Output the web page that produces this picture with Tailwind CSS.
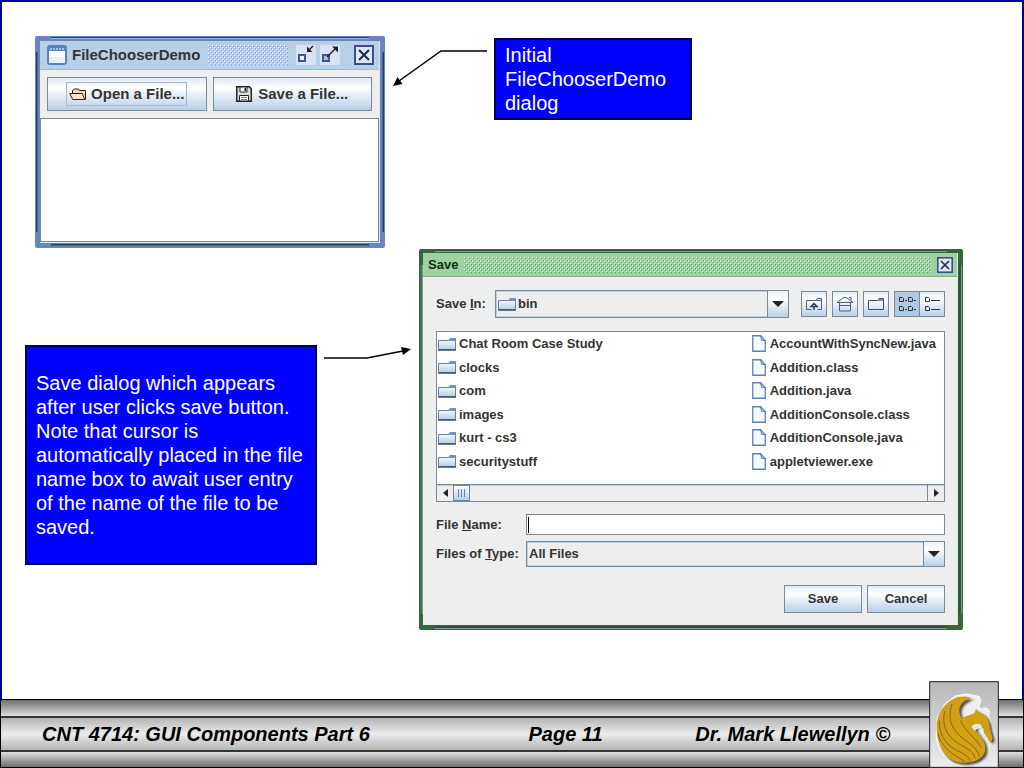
<!DOCTYPE html>
<html lang="en">
  <head>
    <meta charset="UTF-8" />
    <meta name="viewport" content="width=device-width, initial-scale=1.0" />
    <title>CNT 4714: GUI Components Part 6</title>
    <script src="https://cdn.jsdelivr.net/npm/@tailwindcss/browser@4"></script>
  </head>
  <body class="min-h-screen flex flex-col bg-white font-['Liberation_Sans',Arial,sans-serif] text-black">
    <!-- shared icons -->
    <svg class="absolute size-0" aria-hidden="true">
      <defs>
        <linearGradient id="folder-fill" x1="0" y1="0" x2="0" y2="1">
          <stop offset="0" stop-color="#ffffff" />
          <stop offset="1" stop-color="#b8cfe5" />
        </linearGradient>
        <pattern id="bumps-blue" width="4" height="4" patternUnits="userSpaceOnUse">
          <path d="M0 0h1v1h-1zM2 2h1v1h-1z" fill="#f4f8fd" />
          <path d="M1 1h1v1h-1zM3 3h1v1h-1z" fill="#7f9cc8" />
        </pattern>
        <pattern id="bumps-green" width="4" height="4" patternUnits="userSpaceOnUse">
          <path d="M0 0h1v1h-1zM2 2h1v1h-1z" fill="#e6f5e6" />
          <path d="M1 1h1v1h-1zM3 3h1v1h-1z" fill="#5f9a66" />
        </pattern>
        <symbol id="folder" viewBox="0 0 18 14">
          <path d="M.5 3.500h10l1.500-2h5.500v11h-17z" fill="url(#folder-fill)" stroke="#6b7f9e" />
          <path d="M10.500 4l2-3h5v3z" fill="#7590c4" />
          <path d="M0 13h18" stroke="#3d4d6b" stroke-width="1.500" />
        </symbol>
        <symbol id="file" viewBox="0 0 14 17">
          <path d="M.75.75h8l4.500 5v10.500h-12.500z" fill="#f5faff" stroke="#5b80b8" stroke-width="1.300" />
          <path d="M8.500.75l1 4.500 3.750.5z" fill="#b8cfe5" stroke="#5b80b8" />
        </symbol>
        <symbol id="close" viewBox="0 0 20 20">
          <rect x="1" y="1" width="18" height="18" fill="#dce8f6" stroke="#3d4f85" stroke-width="2" />
          <path d="M5 5l10 10M15 5l-10 10" stroke="#1f2a50" stroke-width="2" />
        </symbol>
      </defs>
    </svg>

    <main class="relative flex-1 min-h-[699px] border-2 border-b-0 border-[#000099]">
      <!-- FileChooserDemo window -->
      <section class="absolute left-[33px] top-[34px] w-[350px] rounded-xs bg-[#6885c0] p-[5px] text-[#333333]">
        <span class="absolute inset-x-4 top-px h-[2px] border-b border-[#a3b8dc] bg-[#2b3c60]"></span>
        <span class="absolute inset-x-4 bottom-[2px] h-[2px] border-b border-[#4c6191] bg-[#2b3c60]"></span>
        <span class="absolute inset-y-4 left-px w-[2px] border-r border-[#4c6191] bg-[#2b3c60]"></span>
        <span class="absolute inset-y-4 right-px w-[2px] border-l border-[#4c6191] bg-[#2b3c60]"></span>
        <div class="border-r border-b border-[#dce6f2] bg-[#eeeeee]">
          <header class="flex items-center h-[29px] border-b border-[#a3b8cc] bg-[#b8cfe8] pl-[7px] pr-[5px]">
            <svg class="size-5 shrink-0" viewBox="0 0 20 20">
              <rect x="1" y="1" width="18" height="18" rx="2" fill="#ffffff" stroke="#5a7fc0" stroke-width="2" />
              <path d="M1 2h18v4h-18z" fill="#5a7fc0" />
              <path d="M3 4h14" stroke="#ffffff" stroke-dasharray="2 1" />
              <path d="M2 12h16v6h-16z" fill="#e6effa" />
            </svg>
            <h1 class="ml-[5px] text-[15px] font-bold">FileChooserDemo</h1>
            <svg class="mx-2 h-5 w-20"><rect width="100%" height="100%" fill="url(#bumps-blue)" /></svg>
            <button type="button" aria-label="Minimize" class="size-5">
              <svg class="size-5" viewBox="0 0 20 20" fill="none">
                <path d="M0 0h20v20h-20z" fill="#d6e4f4" />
                <path d="M3 10h6v6h-6z" fill="#e8f0fa" stroke="#40558f" stroke-width="2" />
                <path d="M17 1l-5 5" stroke="#222222" stroke-width="1.500" />
                <path d="M11 1.500v5.500h5.500z" fill="#222222" />
              </svg>
            </button>
            <button type="button" aria-label="Maximize" class="ml-1 size-5">
              <svg class="size-5" viewBox="0 0 20 20" fill="none">
                <path d="M0 0h20v20h-20z" fill="#d6e4f4" />
                <path d="M3 10h6v6h-6z" fill="#a9bfdc" stroke="#40558f" stroke-width="2" />
                <path d="M7 12l9-9" stroke="#222222" stroke-width="1.500" />
                <path d="M12 1.500h6v6z" fill="#222222" />
              </svg>
            </button>
            <button type="button" aria-label="Close" class="ml-auto size-5">
              <svg class="size-5"><use href="#close" /></svg>
            </button>
          </header>
          <div class="grid grid-cols-2 gap-1.5 p-[7px] text-[15px] font-bold">
            <button type="button" class="flex h-[34px] items-center justify-center border border-[#7a8a99] bg-linear-to-b from-[#dfeaf6] via-white via-30% to-[#b8cfe5]">
              <span class="flex items-center gap-1 border border-[#a3b8cc] px-0.5">
                <svg class="h-4 w-[18px]" viewBox="0 0 18 16">
                  <path d="M3.500 12v-7.500l2-1.500h4l1 1.500h6v9z" fill="#f3d9b0" stroke="#222222" />
                  <path d="M.75 7.500h12.500l2.500 6h-12z" fill="#f8e4c4" stroke="#222222" />
                </svg>
                Open a File...
              </span>
            </button>
            <button type="button" class="flex h-[34px] items-center justify-center gap-1.5 border border-[#7a8a99] bg-linear-to-b from-[#dfeaf6] via-white via-30% to-[#b8cfe5]">
              <svg class="size-4" viewBox="0 0 16 16">
                <path d="M.75.75h12.500l2 2v12.500h-14.500z" fill="#d9d9d9" stroke="#222222" stroke-width="1.500" />
                <path d="M4 1h7v5h-7z" fill="#ffffff" stroke="#222222" />
                <path d="M8.500 2h1.500v3h-1.500z" fill="#222222" />
                <path d="M3.500 9.500h9v5.500h-9z" fill="#ffffff" stroke="#222222" />
                <path d="M5 11.500h6M5 13.500h6" stroke="#888888" />
              </svg>
              Save a File...
            </button>
          </div>
          <textarea aria-label="Log" class="block h-[124px] w-full resize-none border border-[#7a8a99] bg-white outline-none"></textarea>
        </div>
      </section>

      <p class="absolute left-[492px] top-9 w-[198px] border-2 border-[#000050] bg-[#0000ff] px-[9px] py-[3px] text-xl/6 text-white">
        Initial FileChooserDemo dialog
      </p>
      <svg class="absolute left-[388px] top-[44px] h-11 w-[100px]" viewBox="390 46 100 44">
        <path d="M487 51h-46l-42 30" fill="none" stroke="#000000" stroke-width="1.500" />
        <path d="M393 86l4.500-9 5 7z" />
      </svg>

      <p class="absolute left-[23px] top-[343px] w-[292px] border-2 border-[#000050] bg-[#0000ff] py-6 pl-[9px] pr-2 text-xl/6 text-white">
        Save dialog which appears after user clicks save button. Note that cursor is automatically placed in the file name box to await user entry of the name of the file to be saved.
      </p>
      <svg class="absolute left-[320px] top-[338px] h-7 w-[92px]" viewBox="322 340 92 28">
        <path d="M324 358h43l36-7" fill="none" stroke="#000000" stroke-width="1.500" />
        <path d="M411 349l-10-2 2 8z" />
      </svg>

      <!-- Save dialog -->
      <section class="absolute left-[417px] top-[247px] w-[544px] rounded-xs bg-[#33693a] p-1 pr-[5px] pb-[5px] text-[13px] font-bold text-[#333333]">
        <span class="absolute inset-x-4 top-px h-[2px] border-b border-[#7f9f8b] bg-[#2f4f3c]"></span>
        <span class="absolute inset-x-4 bottom-px h-[3px] border-b border-[#7f9f8b] bg-[#2f4f3c]"></span>
        <span class="absolute inset-y-4 left-px w-[3px] border-r border-[#7f9f8b] bg-[#4a6b57]"></span>
        <span class="absolute inset-y-4 right-px w-[3px] border-r border-[#7f9f8b] bg-[#2f4f3c]"></span>
        <div class="border-r border-[#d5ecd2] bg-[#eeeeee]">
          <header class="flex h-6 items-center gap-1.5 border-b border-[#7fb083] bg-[#9fd0a0] pl-[5px] pr-1">
            <h2 class="text-[#0c330f]">Save</h2>
            <svg class="h-4 flex-1"><rect width="100%" height="100%" fill="url(#bumps-green)" /></svg>
            <button type="button" aria-label="Close" class="size-4">
              <svg class="size-4"><use href="#close" /></svg>
            </button>
          </header>
          <form class="p-3 pt-[13px] pl-[13px]">
            <div class="flex items-center gap-[5px]">
              <label for="save-in" class="w-[54px]">Save <u>I</u>n:</label>
              <div class="relative mr-[7px] flex-1">
                <svg class="absolute left-[3px] top-[7px] h-[14px] w-[18px]"><use href="#folder" /></svg>
                <select id="save-in" class="block h-7 w-full appearance-none border border-[#7a8a99] bg-[#eeeeee] pl-[22px] shadow-[inset_0_0_0_1px_#b8cfe5] outline-none">
                  <option>bin</option>
                </select>
                <span class="pointer-events-none absolute inset-y-0 right-0 flex w-[22px] items-center justify-center border border-[#7a8a99] bg-linear-to-b from-[#eaf1f9] via-white via-30% to-[#b8cfe5]">
                  <svg class="h-1.5 w-3" viewBox="0 0 12 6"><path d="M0 0h12l-6 6z" fill="#222222" /></svg>
                </span>
              </div>
              <button type="button" aria-label="Up One Level" class="flex size-[26px] items-center justify-center border border-[#7a8a99] bg-linear-to-b from-[#dfeaf6] via-white via-30% to-[#b8cfe5]">
                <svg class="h-4 w-[18px]" viewBox="0 0 18 16" fill="none" stroke="#4b5f80">
                  <path d="M6.500 13.500h-5v-9h9l1.500-2h4.500v11h-4M11 4.500h5.500" />
                  <path d="M6 10.500l3-3 3 3zM9 10v4" stroke="#2b3c60" stroke-width="1.500" />
                </svg>
              </button>
              <button type="button" aria-label="Home" class="flex size-[26px] items-center justify-center border border-[#7a8a99] bg-linear-to-b from-[#dfeaf6] via-white via-30% to-[#b8cfe5]">
                <svg class="h-4 w-[18px]" viewBox="0 0 18 16" fill="none" stroke="#4b5f80">
                  <path d="M1 6.500l6.500-5h3l6.500 5z" fill="#eef4fb" />
                  <path d="M3.500 7v8h11v-8M3.500 9.500h11" />
                  <path d="M13 1.500h2v3" />
                </svg>
              </button>
              <button type="button" aria-label="Create New Folder" class="flex size-[26px] items-center justify-center border border-[#7a8a99] bg-linear-to-b from-[#dfeaf6] via-white via-30% to-[#b8cfe5]">
                <svg class="h-4 w-[18px]" viewBox="0 0 18 16" fill="none" stroke="#444c5c">
                  <path d="M1.500 13.500v-9h9l1.500-2h4.500v11z" />
                  <path d="M11 4h5" stroke="#7590c4" stroke-width="2" />
                </svg>
              </button>
              <div class="flex">
                <button type="button" aria-label="List" aria-pressed="true" class="flex size-[26px] items-center justify-center border border-[#7a8a99] bg-[#b0c8e0]">
                  <svg class="h-4 w-[18px]" viewBox="0 0 18 16" fill="none" stroke="#333333">
                    <path d="M1.500 1.500h3l1 1v3h-4zM10.500 1.500h3l1 1v3h-4zM1.500 10.500h3l1 1v3h-4zM10.500 10.500h3l1 1v3h-4z" />
                    <path d="M7 4.500h2M16 4.500h2M7 13.500h2M16 13.500h2" />
                  </svg>
                </button>
                <button type="button" aria-label="Details" aria-pressed="false" class="-ml-px flex size-[26px] items-center justify-center border border-[#7a8a99] bg-linear-to-b from-[#dfeaf6] via-white via-30% to-[#b8cfe5]">
                  <svg class="h-4 w-[18px]" viewBox="0 0 18 16" fill="none" stroke="#333333">
                    <path d="M2.500 1.500h3l1 1v3h-4zM2.500 10.500h3l1 1v3h-4z" />
                    <path d="M8 4.500h9M8 13.500h9" />
                  </svg>
                </button>
              </div>
            </div>

            <div class="mt-[13px] border border-[#7a8a99] bg-white">
              <ul class="mb-[11px] grid h-[141px] grid-flow-col grid-cols-[62%_38%] grid-rows-6 pl-px">
                <li class="flex items-center gap-[3px]"><svg class="h-[14px] w-[18px]"><use href="#folder" /></svg>Chat Room Case Study</li>
                <li class="flex items-center gap-[3px]"><svg class="h-[14px] w-[18px]"><use href="#folder" /></svg>clocks</li>
                <li class="flex items-center gap-[3px]"><svg class="h-[14px] w-[18px]"><use href="#folder" /></svg>com</li>
                <li class="flex items-center gap-[3px]"><svg class="h-[14px] w-[18px]"><use href="#folder" /></svg>images</li>
                <li class="flex items-center gap-[3px]"><svg class="h-[14px] w-[18px]"><use href="#folder" /></svg>kurt - cs3</li>
                <li class="flex items-center gap-[3px]"><svg class="h-[14px] w-[18px]"><use href="#folder" /></svg>securitystuff</li>
                <li class="flex items-center gap-1"><svg class="h-[17px] w-[14px]"><use href="#file" /></svg>AccountWithSyncNew.java</li>
                <li class="flex items-center gap-1"><svg class="h-[17px] w-[14px]"><use href="#file" /></svg>Addition.class</li>
                <li class="flex items-center gap-1"><svg class="h-[17px] w-[14px]"><use href="#file" /></svg>Addition.java</li>
                <li class="flex items-center gap-1"><svg class="h-[17px] w-[14px]"><use href="#file" /></svg>AdditionConsole.class</li>
                <li class="flex items-center gap-1"><svg class="h-[17px] w-[14px]"><use href="#file" /></svg>AdditionConsole.java</li>
                <li class="flex items-center gap-1"><svg class="h-[17px] w-[14px]"><use href="#file" /></svg>appletviewer.exe</li>
              </ul>
              <div class="flex h-[17px] border-t border-[#7a8a99] bg-[#eeeeee] shadow-[inset_0_1px_0_#b8cfe5]">
                <button type="button" aria-label="Scroll left" class="flex w-4 items-center justify-center">
                  <svg class="h-2 w-[5px]" viewBox="0 0 5 8"><path d="M5 0v8l-5-4z" fill="#222222" /></svg>
                </button>
                <span class="flex w-[17px] items-center justify-center gap-0.5 border border-[#6382bf] bg-linear-to-b from-white to-[#b8cfe5]">
                  <i class="h-2 w-px bg-[#6382bf]"></i><i class="h-2 w-px bg-[#6382bf]"></i><i class="h-2 w-px bg-[#6382bf]"></i>
                </span>
                <button type="button" aria-label="Scroll right" class="ml-auto flex w-[17px] items-center justify-center border-l border-[#7a8a99]">
                  <svg class="h-2 w-[5px]" viewBox="0 0 5 8"><path d="M0 0v8l5-4z" fill="#222222" /></svg>
                </button>
              </div>
            </div>

            <div class="mt-3 grid grid-cols-[90px_1fr] items-center gap-y-1.5">
              <label for="file-name">File <u>N</u>ame:</label>
              <div class="flex h-[21px] items-center border border-[#7a8a99] bg-white pl-px">
                <span class="h-4 w-px bg-black"></span>
                <input id="file-name" type="text" class="h-full min-w-0 flex-1 outline-none" />
              </div>
              <label for="file-type" class="whitespace-nowrap">Files of <u>T</u>ype:</label>
              <div class="relative">
                <select id="file-type" class="block h-[26px] w-full appearance-none border border-[#7a8a99] bg-[#eeeeee] pl-0.5 shadow-[inset_0_0_0_1px_#b8cfe5] outline-none">
                  <option>All Files</option>
                </select>
                <span class="pointer-events-none absolute inset-y-0 right-0 flex w-[22px] items-center justify-center border border-[#7a8a99] bg-linear-to-b from-[#eaf1f9] via-white via-30% to-[#b8cfe5]">
                  <svg class="h-1.5 w-3" viewBox="0 0 12 6"><path d="M0 0h12l-6 6z" fill="#222222" /></svg>
                </span>
              </div>
            </div>

            <div class="mt-[18px] flex justify-end gap-[5px]">
              <button type="button" class="h-7 w-[78px] border border-[#7a8a99] bg-linear-to-b from-[#dfeaf6] via-white via-30% to-[#b8cfe5]">Save</button>
              <button type="button" class="h-7 w-[78px] border border-[#7a8a99] bg-linear-to-b from-[#dfeaf6] via-white via-30% to-[#b8cfe5]">Cancel</button>
            </div>
          </form>
        </div>
      </section>
    </main>

    <footer class="relative border border-black text-xl font-bold italic">
      <div class="h-4 bg-linear-to-b from-[#6e6e6e] to-[#e0e0e0]"></div>
      <div class="grid h-9 grid-cols-[487fr_167fr_328fr] items-center border-y-2 border-[#333333] bg-linear-to-b from-[#b4b4b4] via-[#ececec] to-[#b4b4b4] pl-[41px]">
        <span>CNT 4714: GUI Components Part 6</span>
        <span>Page 11</span>
        <span>Dr. Mark Llewellyn ©</span>
      </div>
      <div class="h-[15px] bg-linear-to-b from-[#e0e0e0] to-[#6e6e6e]"></div>
      <!-- pegasus logo -->
      <svg class="absolute -bottom-px right-[24px] h-[87px] w-[70px]" viewBox="3 3 210 261">
        <defs>
          <linearGradient id="plate" x1="0" y1="0" x2="0" y2="1">
            <stop offset="0" stop-color="#b8b8b8" />
            <stop offset="1" stop-color="#ececec" />
          </linearGradient>
          <filter id="soft"><feGaussianBlur stdDeviation="3" /></filter>
          <path id="pegasus" d="M132 54C80 34 26 80 26 142c0 60 30 106 80 106 30 0 64-10 66-42 1-24-14-36-28-54l-1-14c6-6 18-6 23 4l2 18 8 4 6 18 8 2 4-10-8-28c-2-28-14-46-34-50l-8-10-4 12c-12 8-28 8-38 18C86 92 94 62 132 54z" />
        </defs>
        <rect x="5" y="5" width="206" height="257" fill="url(#plate)" stroke="#222222" stroke-width="3" />
        <path d="M138 46l16 4 4 14-6 16 8 8 14-4 10 8-2 16 8 18 12 44-2 18-14 6-4 24-16 24-28 14-40 2-36-14-26-34-12-40 4-56 22-42 32-24 30-6z" fill="#eeeeee" stroke="#ffffff" stroke-width="3" />
        <use href="#pegasus" transform="translate(7 7)" fill="#5a5048" filter="url(#soft)" />
        <use href="#pegasus" fill="#d2a012" />
        <path d="M130 140c8-10 24-12 32-2l-2 8c-10-4-14 2-20 6z" fill="#e8e8e8" />
        <g fill="none" stroke="#84641a" stroke-width="3">
          <path d="M72 72c-18 56 8 86 42 110 20 14 34 26 40 48" />
          <path d="M50 94c-12 54 18 86 54 104 20 10 32 20 38 38" />
          <path d="M34 122c-2 48 26 78 58 92 18 8 28 14 34 28" />
          <path d="M30 160c8 38 36 58 80 84" />
          <path d="M98 122c12 30 42 50 62 80" />
        </g>
      </svg>
    </footer>
  </body>
</html>
